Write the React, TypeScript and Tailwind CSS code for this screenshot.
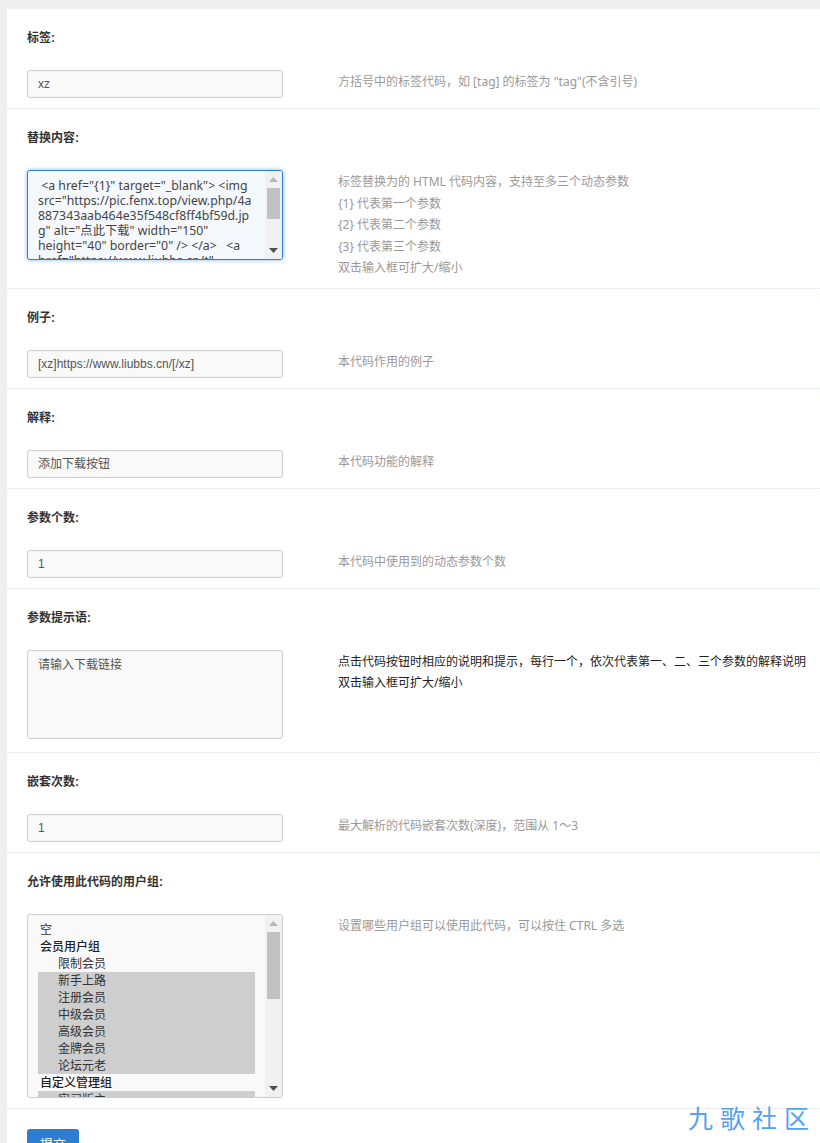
import React from 'react'

const fontStack = "font-['Liberation_Sans','Noto_Sans_CJK_SC',sans-serif]"
const noto = "font-['Noto_Sans','Noto_Sans_CJK_SC',sans-serif]"

function Scrollbar({ thumbHeight }: { thumbHeight: string }) {
  return (
    <div className="flex w-[17px] shrink-0 flex-col items-center bg-[#f1f1f1]">
      <svg className="mt-[6px] h-[5px] w-[9px] shrink-0" viewBox="0 0 9 5">
        <path d="M4.5 0L9 5H0z" fill="#b5b5b5" />
      </svg>
      <div className={`mt-[6px] w-[13px] shrink-0 bg-[#c1c1c1] ${thumbHeight}`} />
      <div className="flex-1" />
      <svg className="mb-[6px] h-[5px] w-[9px] shrink-0" viewBox="0 0 9 5">
        <path d="M0 0H9L4.5 5z" fill="#505050" />
      </svg>
    </div>
  )
}

function FieldRow({ label, help, helpDark, bottom, children }: {
  label: string
  help: string[]
  helpDark?: boolean
  bottom: string
  children: React.ReactNode
}) {
  return (
    <div className={`border-b border-dotted border-[#d4e6f5] px-5 ${bottom}`}>
      <div className="flex h-[61px] items-start pt-[21px] text-[12px] leading-[17px] font-bold text-[#333]">{label}</div>
      <div className="flex items-start">
        <div className="w-[256px] shrink-0">{children}</div>
        <div className={`ml-[55px] whitespace-nowrap pt-[1px] text-[12px] leading-[21.5px] ${noto} ${helpDark ? 'text-[#222]' : 'text-[#999]'}`}>
          {help.map((h) => <div key={h}>{h}</div>)}
        </div>
      </div>
    </div>
  )
}

function TextInput({ value }: { value: string }) {
  return (
    <div className="flex h-[28px] items-center rounded-[3px] border border-[#ccc] bg-[#f9f9f9] px-[10px] text-[12px] text-[#555]">
      {value}
    </div>
  )
}

const groups = [
  { name: '空', kind: 'plain' },
  { name: '会员用户组', kind: 'group' },
  { name: '限制会员', kind: 'option' },
  { name: '新手上路', kind: 'selected' },
  { name: '注册会员', kind: 'selected' },
  { name: '中级会员', kind: 'selected' },
  { name: '高级会员', kind: 'selected' },
  { name: '金牌会员', kind: 'selected' },
  { name: '论坛元老', kind: 'selected' },
  { name: '自定义管理组', kind: 'group' },
  { name: '实习版主', kind: 'selected' },
]

export default function App() {
  return (
    <div className={`relative h-[1143px] overflow-hidden bg-[#efefef] pt-[9px] pl-[7px] ${fontStack}`}>
      <div className="bg-white">
        <FieldRow label="标签:" help={['方括号中的标签代码，如 [tag] 的标签为 "tag"(不含引号)']} bottom="pb-[10px]">
          <TextInput value="xz" />
        </FieldRow>

        <FieldRow
          label="替换内容:"
          help={['标签替换为的 HTML 代码内容，支持至多三个动态参数', '{1} 代表第一个参数', '{2} 代表第二个参数', '{3} 代表第三个参数', '双击输入框可扩大/缩小']}
          bottom="pb-[9px]"
        >
          <div className="flex h-[90px] overflow-hidden rounded-[3px] border border-[#2c7ed6] bg-[#f5f9fe] shadow-[0_0_4px_#7db8f0]">
            <div className={`flex-1 overflow-hidden whitespace-pre pt-[7px] pl-[10px] text-[12.3px] leading-[15px] text-[#444] ${noto}`}>
              <div>{' <a href="{1}" target="_blank"> <img'}</div>
              <div>src="https://pic.fenx.top/view.php/4a</div>
              <div>887343aab464e35f548cf8ff4bf59d.jp</div>
              <div>g" alt="点此下载" width="150"</div>
              <div>{'height="40" border="0" /> </a>   <a'}</div>
              <div>href="https://www.liubbs.cn/t"</div>
            </div>
            <Scrollbar thumbHeight="h-[31px]" />
          </div>
        </FieldRow>

        <FieldRow label="例子:" help={['本代码作用的例子']} bottom="pb-[10px]">
          <TextInput value="[xz]https://www.liubbs.cn/[/xz]" />
        </FieldRow>

        <FieldRow label="解释:" help={['本代码功能的解释']} bottom="pb-[10px]">
          <TextInput value="添加下载按钮" />
        </FieldRow>

        <FieldRow label="参数个数:" help={['本代码中使用到的动态参数个数']} bottom="pb-[10px]">
          <TextInput value="1" />
        </FieldRow>

        <FieldRow
          label="参数提示语:"
          help={['点击代码按钮时相应的说明和提示，每行一个，依次代表第一、二、三个参数的解释说明', '双击输入框可扩大/缩小']}
          helpDark
          bottom="pb-[13px]"
        >
          <div className="h-[89px] rounded-[3px] border border-[#ccc] bg-[#f9f9f9] px-[10px] py-[7px] text-[12px] leading-[15px] text-[#555]">
            请输入下载链接
          </div>
        </FieldRow>

        <FieldRow label="嵌套次数:" help={['最大解析的代码嵌套次数(深度)，范围从 1～3']} bottom="pb-[10px]">
          <TextInput value="1" />
        </FieldRow>

        <FieldRow label="允许使用此代码的用户组:" help={['设置哪些用户组可以使用此代码，可以按住 CTRL 多选']} bottom="pb-[10px]">
          <div className="flex h-[184px] overflow-hidden rounded-[3px] border border-[#ccc] bg-[#f9f9f9]">
            <div className="flex-1 overflow-hidden pt-[6px] pl-[10px] pr-[10px] text-[12px] leading-[18px] text-[#333]">
              {groups.map((g) => (
                <div
                  key={g.name}
                  className={`h-[17px] whitespace-nowrap ${
                    g.kind === 'plain' ? 'pl-[2px]' :
                    g.kind === 'group' ? 'pl-[2px] font-medium text-[#222]' :
                    g.kind === 'selected' ? 'bg-[#cecece] pl-[20px]' :
                    'pl-[20px]'
                  }`}
                >
                  {g.name}
                </div>
              ))}
            </div>
            <Scrollbar thumbHeight="h-[67px]" />
          </div>
        </FieldRow>

        <div className="px-5 pt-[20px]">
          <button className="h-[32px] w-[52px] rounded-[3px] bg-[#2d7dd2] text-[13px] text-white">提交</button>
        </div>
      </div>

      <div className="absolute top-[1100px] left-[688px] whitespace-nowrap text-[25px] leading-[34px] tracking-[7px] text-[#55a2ef] font-['Noto_Sans_CJK_SC',serif]">
        九歌社区
      </div>
    </div>
  )
}
